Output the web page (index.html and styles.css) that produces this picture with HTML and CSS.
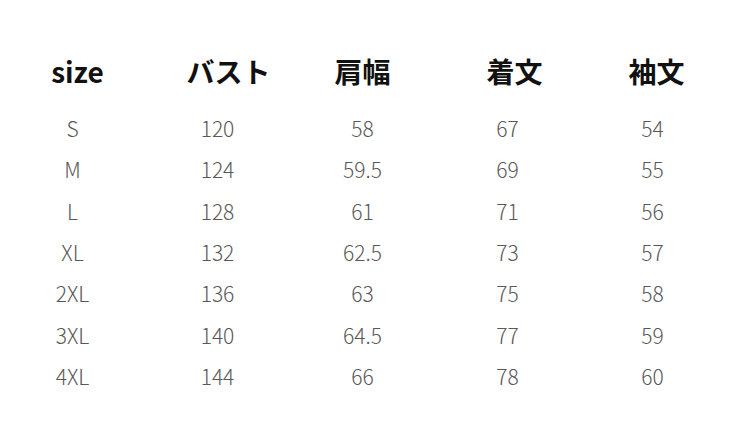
FILE: index.html
```html
<!DOCTYPE html>
<html lang="ja">
<head>
<meta charset="utf-8">
<link rel="stylesheet" href="styles.css">
</head>
<body>
<div class="table">
  <div class="row head">
    <div class="cell c1">size</div>
    <div class="cell c2">バスト</div>
    <div class="cell c3">肩幅</div>
    <div class="cell c4">着文</div>
    <div class="cell c5">袖文</div>
  </div>
  <div class="row"><div class="cell">S</div><div class="cell">120</div><div class="cell">58</div><div class="cell">67</div><div class="cell">54</div></div>
  <div class="row"><div class="cell">M</div><div class="cell">124</div><div class="cell">59.5</div><div class="cell">69</div><div class="cell">55</div></div>
  <div class="row"><div class="cell">L</div><div class="cell">128</div><div class="cell">61</div><div class="cell">71</div><div class="cell">56</div></div>
  <div class="row"><div class="cell">XL</div><div class="cell">132</div><div class="cell">62.5</div><div class="cell">73</div><div class="cell">57</div></div>
  <div class="row"><div class="cell">2XL</div><div class="cell">136</div><div class="cell">63</div><div class="cell">75</div><div class="cell">58</div></div>
  <div class="row"><div class="cell">3XL</div><div class="cell">140</div><div class="cell">64.5</div><div class="cell">77</div><div class="cell">59</div></div>
  <div class="row"><div class="cell">4XL</div><div class="cell">144</div><div class="cell">66</div><div class="cell">78</div><div class="cell">60</div></div>
</div>
</body>
</html>
```

FILE: styles.css
```css
html, body {
  margin: 0;
  padding: 0;
  background: #ffffff;
}
body {
  width: 750px;
  height: 442px;
  overflow: hidden;
  font-family: "Noto Sans CJK JP", "Noto Sans", sans-serif;
}
.table {
  padding-top: 34px;
}
.row {
  display: grid;
  grid-template-columns: repeat(5, 145px);
  height: 41.33px;
  align-items: center;
  color: #585858;
  font-size: 21px;
  font-weight: 300;
}
.row.head {
  height: 74px;
  color: #111111;
  font-size: 28px;
  font-weight: 700;
}
.cell {
  text-align: center;
  line-height: 1;
}
.head .c1 { padding-left: 10px; }
.head .c2 { padding-left: 22px; }
.head .c3 { padding-left: 0; }
.head .c4 { padding-left: 14px; }
.head .c5 { padding-left: 8px; }
```
